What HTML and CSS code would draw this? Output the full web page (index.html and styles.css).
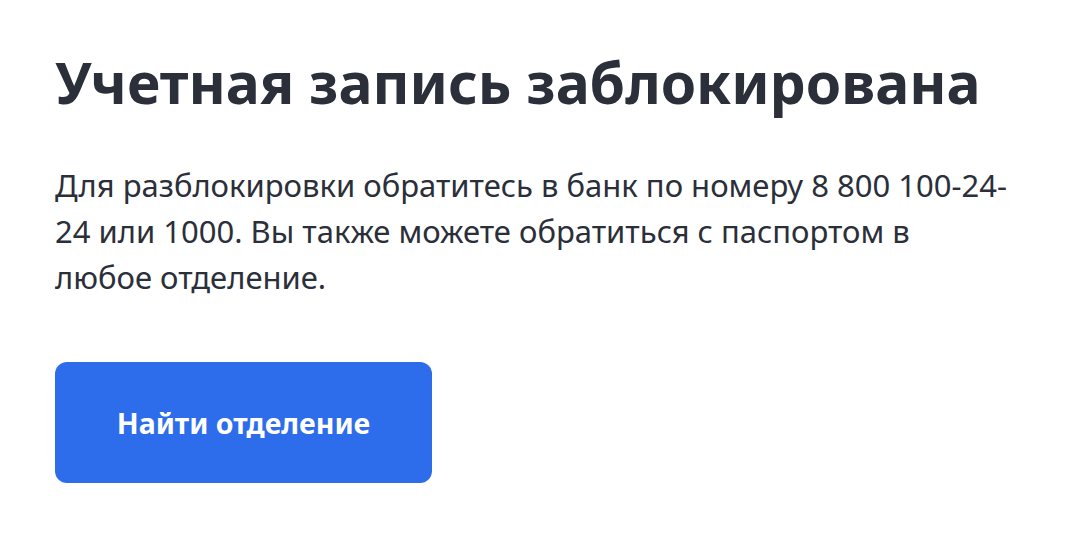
FILE: index.html
```html
<!DOCTYPE html>
<html lang="ru">

<head>
    <meta charset="UTF-8">
    <meta name="viewport" content="width=device-width, initial-scale=1.0">
    <title>Учетная запись заблокирована</title>
    <link rel="stylesheet" href="styles.css">
</head>

<body>

    <div class="container">
        <h1>Учетная запись заблокирована</h1>

        <p class="message">
            Для разблокировки обратитесь в банк по номеру 8&nbsp;800&nbsp;100&#8209;24-<wbr>24 или 1000. Вы также можете обратиться с паспортом в любое отделение.
        </p>

        <div class="button-container">
            <button type="button">Найти отделение</button>
        </div>
    </div>

</body>

</html>
```

FILE: styles.css
```css
body {
    font-family: 'Noto Sans', 'Open Sans', sans-serif;
    background-color: #fff;
    color: #2b2f3a;
    margin: 0;
    padding: 0;
}

.container {
    padding: 48px 55px;
    max-width: 953px;
}

h1 {
    margin: 0 0 46px;
    font-size: 57px;
    line-height: 68px;
    font-weight: 700;
    color: #2b2f3a;
}

.message {
    margin: 0 0 62px;
    font-size: 31px;
    line-height: 46px;
}

button {
    width: 377px;
    height: 121px;
    border: none;
    border-radius: 12px;
    background-color: #2d6cea;
    color: #fff;
    font-family: inherit;
    font-size: 28.5px;
    font-weight: 700;
    cursor: pointer;
}
```
